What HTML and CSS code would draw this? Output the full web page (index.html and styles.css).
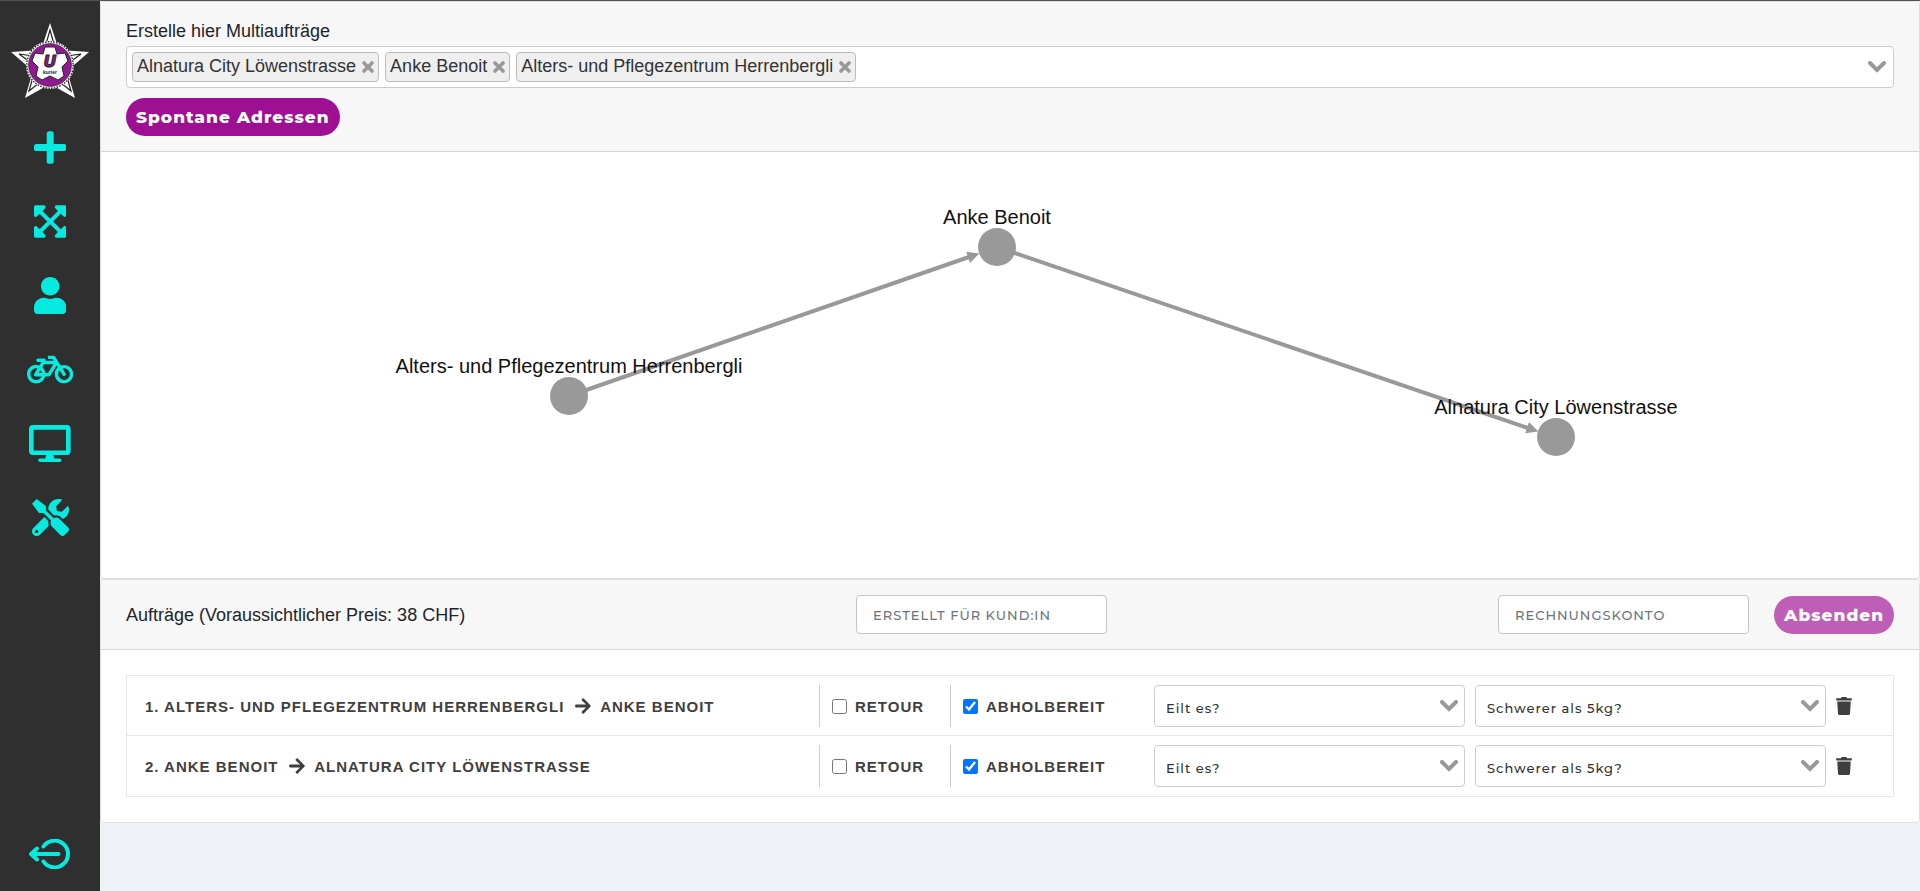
FILE: index.html
```html
<!DOCTYPE html>
<html lang="de">
<head>
    <meta charset="UTF-8">
    <meta name="viewport" content="width=device-width, initial-scale=1.0">
    <title>Multiaufträge</title>
    <link rel="stylesheet" href="styles.css">
</head>
<body>
    <svg class="sprite" aria-hidden="true">
        <symbol id="chevron" viewBox="0 0 18 12">
            <path d="M2 2l7 7 7-7" fill="none" stroke="currentColor" stroke-width="4" stroke-linecap="round"/>
        </symbol>
        <symbol id="cross" viewBox="0 0 12 12">
            <path d="M2 2l8 8M10 2l-8 8" fill="none" stroke="currentColor" stroke-width="3.6" stroke-linecap="round"/>
        </symbol>
        <symbol id="arrow" viewBox="0 0 448 512">
            <path fill="currentColor" d="M190.5 66.9l22.2-22.2c9.4-9.4 24.6-9.4 33.9 0L441 239c9.4 9.4 9.4 24.6 0 33.9L246.6 467.3c-9.4 9.4-24.6 9.4-33.9 0l-22.2-22.2c-9.5-9.5-9.3-25 .4-34.3L311.4 296H24c-13.3 0-24-10.7-24-24v-32c0-13.3 10.7-24 24-24h287.4L190.9 101.2c-9.8-9.3-10-24.8-.4-34.3z"/>
        </symbol>
        <symbol id="trash" viewBox="0 0 448 512">
            <path fill="currentColor" d="M432 32H312l-9.4-18.7A24 24 0 0 0 281.1 0H166.8a23.72 23.72 0 0 0-21.4 13.3L136 32H16A16 16 0 0 0 0 48v32a16 16 0 0 0 16 16h416a16 16 0 0 0 16-16V48a16 16 0 0 0-16-16zM53.2 467a48 48 0 0 0 47.9 45h245.8a48 48 0 0 0 47.9-45L416 128H32z"/>
        </symbol>
    </svg>

    <nav class="sidebar">
        <a href="#" class="logo" aria-label="Startseite">
            <svg width="78" height="76" viewBox="0 0 78 76">
                <path d="M39 0l9 27 30 2-22 19 8 27-25-14-25 14 8-27L0 29l30-2z" fill="#fff"/>
                <path d="M39 7l-4 14h8zM8 31l11 8 3-6zM70 31l-11 8-3-6zM18 68l4-14 6 6zM60 68l-4-14-6 6z" fill="none" stroke="#222" stroke-width="1.2"/>
                <circle cx="39" cy="42" r="24" fill="#fff"/>
                <circle cx="39" cy="42" r="23.2" fill="none" stroke="#222" stroke-width="1.4" stroke-dasharray="1.5 1.3"/>
                <circle cx="39" cy="42" r="21.5" fill="#8f1a8f" stroke="#222" stroke-width=".6"/>
                <path d="M34 24h10l2 7 8-1 3 8-6 6 2 9-6 4-8-4-8 4-6-4 2-9-6-6 3-8 8 1z" fill="#fff" stroke="#222" stroke-linejoin="round"/>
                <text x="39" y="44" class="logo-letter">U</text>
                <text x="39" y="51" class="logo-word">kurier</text>
            </svg>
        </a>
        <ul class="menu">
            <li><a href="#" aria-label="Neuer Auftrag"><svg viewBox="0 0 448 512"><path d="M416 208H272V64c0-17.67-14.33-32-32-32h-32c-17.67 0-32 14.33-32 32v144H32c-17.67 0-32 14.33-32 32v32c0 17.67 14.33 32 32 32h144v144c0 17.67 14.33 32 32 32h32c17.67 0 32-14.33 32-32V304h144c17.67 0 32-14.33 32-32v-32c0-17.67-14.33-32-32-32z"/></svg></a></li>
            <li><a href="#" aria-label="Multiaufträge"><svg viewBox="0 0 448 512"><path d="M448 344v112a23.94 23.94 0 0 1-24 24H312c-21.39 0-32.09-25.9-17-41l36.2-36.2L224 295.6 116.77 402.9 153 439c15.09 15.1 4.39 41-17 41H24a23.94 23.94 0 0 1-24-24V344c0-21.4 25.89-32.1 41-17l36.19 36.2L184.46 256 77.18 148.7 41 185c-15.1 15.1-41 4.4-41-17V56a23.94 23.94 0 0 1 24-24h112c21.39 0 32.09 25.9 17 41l-36.2 36.2L224 216.4l107.23-107.3L295 73c-15.09-15.1-4.39-41 17-41h112a23.94 23.94 0 0 1 24 24v112c0 21.4-25.89 32.1-41 17l-36.19-36.2L263.54 256l107.28 107.3L407 327.1c15.1-15.2 41-4.5 41 16.9z"/></svg></a></li>
            <li><a href="#" aria-label="Kunden"><svg viewBox="0 0 448 512"><path d="M224 256c70.7 0 128-57.3 128-128S294.7 0 224 0 96 57.3 96 128s57.3 128 128 128zm89.6 32h-16.7c-22.2 10.2-46.9 16-72.9 16s-50.6-5.8-72.9-16h-16.7C60.2 288 0 348.2 0 422.4V464c0 26.5 21.5 48 48 48h352c26.5 0 48-21.5 48-48v-41.6c0-74.2-60.2-134.4-134.4-134.4z"/></svg></a></li>
            <li><a href="#" aria-label="Kuriere"><svg viewBox="0 0 640 512"><path d="M512.509 192.001c-16.373-.064-32.03 2.955-46.436 8.495l-77.68-125.153A24 24 0 0 0 368.001 64h-64c-8.837 0-16 7.163-16 16v16c0 8.837 7.163 16 16 16h50.649l14.896 24H256.002v-16c0-8.837-7.163-16-16-16h-87.459c-13.441 0-24.777 10.999-24.536 24.437.232 13.044 10.876 23.563 23.995 23.563h48.726l-29.417 47.52c-13.433-4.83-27.904-7.483-42.992-7.52C58.094 191.83.412 249.012.002 319.236-.413 390.279 57.055 448 128.002 448c59.642 0 109.758-40.793 123.967-96h52.033a24 24 0 0 0 20.406-11.367L410.37 201.77l14.938 24.067c-25.455 23.448-41.385 57.081-41.307 94.437.145 68.833 57.899 127.051 126.729 127.719 70.606.685 128.181-55.803 129.255-125.996 1.086-70.941-56.526-129.72-127.476-129.996zM186.75 265.772c9.727 10.529 16.673 23.661 19.642 38.228h-43.306l23.664-38.228zM128.002 400c-44.112 0-80-35.888-80-80s35.888-80 80-80c5.869 0 11.586.653 17.099 1.859l-45.505 73.509C89.715 331.327 101.213 352 120.002 352h81.3c-12.37 28.225-40.562 48-73.3 48zm162.63-96h-35.624c-3.96-31.756-19.556-59.894-42.383-80.026L237.371 184h127.547l-74.286 120zm217.057 95.886c-41.036-2.165-74.049-35.692-75.627-76.755-.812-21.121 6.633-40.518 19.335-55.263l44.433 71.586c4.66 7.508 14.524 9.816 22.032 5.156l13.594-8.437c7.508-4.66 9.817-14.524 5.156-22.032l-44.468-71.643a79.901 79.901 0 0 1 19.858-2.497c44.112 0 80 35.888 80 80-.001 45.54-38.252 82.316-84.313 79.885z"/></svg></a></li>
            <li><a href="#" aria-label="Leitstelle"><svg viewBox="0 0 576 512"><path d="M528 0H48C21.5 0 0 21.5 0 48v320c0 26.5 21.5 48 48 48h192l-16 48h-72c-13.3 0-24 10.7-24 24s10.7 24 24 24h272c13.3 0 24-10.7 24-24s-10.7-24-24-24h-72l-16-48h192c26.5 0 48-21.5 48-48V48c0-26.5-21.5-48-48-48zm-16 352H64V64h448v288z"/></svg></a></li>
            <li><a href="#" aria-label="Einstellungen"><svg viewBox="0 0 512 512"><path d="M501.1 395.7L384 278.6c-23.1-23.1-57.6-27.6-85.4-13.9L192 158.1V96L64 0 0 64l96 128h62.1l106.6 106.6c-13.6 27.8-9.2 62.3 13.9 85.4l117.1 117.1c14.6 14.6 38.2 14.6 52.7 0l52.7-52.7c14.5-14.6 14.5-38.2 0-52.7zM331.7 225c28.3 0 54.9 11 74.9 31l19.4 19.4c15.8-6.9 30.8-16.5 43.8-29.5 37.1-37.1 49.7-89.3 37.9-136.7-2.2-9-13.5-12.1-20.1-5.5l-74.4 74.4-67.9-11.3L334 98.9l74.4-74.4c6.6-6.6 3.4-17.9-5.7-20.2-47.4-11.7-99.6.9-136.6 37.9-28.5 28.5-41.9 66.1-41.2 103.6l82.1 82.1c8.1-1.9 16.5-2.9 24.7-2.9zm-103.9 82l-56.7-56.7L18.7 402.8c-25 25-25 65.5 0 90.5s65.5 25 90.5 0l123.6-123.6c-7.6-19.9-9.9-41.6-5-62.7zM64 472c-13.2 0-24-10.8-24-24 0-13.3 10.7-24 24-24s24 10.7 24 24c0 13.2-10.7 24-24 24z"/></svg></a></li>
        </ul>
        <a href="#" class="logout" aria-label="Abmelden">
            <svg width="42" height="30" viewBox="0 0 42 30"><path d="M14.5 7.5a13.4 13.4 0 1 1 0 15M29.5 15H3M8 9.5L2 15l6 5.5"/></svg>
        </a>
    </nav>

    <main class="content">
        <section class="card">
            <div class="card-header">
                <label class="title" for="addressInput">Erstelle hier Multiaufträge</label>
                <div class="multiselect">
                    <span class="chip">Alnatura City Löwenstrasse<button type="button" aria-label="Entfernen"><svg><use href="#cross"/></svg></button></span>
                    <span class="chip">Anke Benoit<button type="button" aria-label="Entfernen"><svg><use href="#cross"/></svg></button></span>
                    <span class="chip">Alters- und Pflegezentrum Herrenbergli<button type="button" aria-label="Entfernen"><svg><use href="#cross"/></svg></button></span>
                    <input type="text" id="addressInput">
                    <svg class="chevron"><use href="#chevron"/></svg>
                </div>
                <button type="button" class="btn">Spontane Adressen</button>
            </div>
            <svg class="graph" viewBox="0 0 1818 426">
                <defs>
                    <marker id="arrowHead" markerUnits="userSpaceOnUse" markerWidth="12" markerHeight="12" refX="1" refY="6" orient="auto">
                        <path d="M0 0l12 6-12 6z" fill="#999"/>
                    </marker>
                </defs>
                <g class="edges">
                    <line x1="468" y1="244" x2="868" y2="105"/>
                    <line x1="896" y1="95" x2="1427" y2="276"/>
                </g>
                <g class="nodes">
                    <circle cx="468" cy="244" r="19"/>
                    <circle cx="896" cy="95" r="19"/>
                    <circle cx="1455" cy="285" r="19"/>
                </g>
                <g class="labels">
                    <text x="468" y="221">Alters- und Pflegezentrum Herrenbergli</text>
                    <text x="896" y="72">Anke Benoit</text>
                    <text x="1455" y="262">Alnatura City Löwenstrasse</text>
                </g>
            </svg>
        </section>

        <section class="card">
            <div class="card-header toolbar">
                <h2 class="title">Aufträge (Voraussichtlicher Preis: 38 CHF)</h2>
                <input type="text" class="field" placeholder="Erstellt für Kund:in" aria-label="Erstellt für Kund:in">
                <div class="toolbar-end">
                    <input type="text" class="field" placeholder="Rechnungskonto" aria-label="Rechnungskonto">
                    <button type="submit" class="btn btn-disabled">Absenden</button>
                </div>
            </div>
            <ul class="orders">
                <li class="order">
                    <div class="route">1. Alters- und Pflegezentrum Herrenbergli <svg><use href="#arrow"/></svg> Anke Benoit</div>
                    <label class="check"><input type="checkbox">Retour</label>
                    <label class="check"><input type="checkbox" checked>Abholbereit</label>
                    <div class="select">
                        <select aria-label="Eilt es?"><option>Eilt es?</option></select>
                        <svg class="chevron"><use href="#chevron"/></svg>
                    </div>
                    <div class="select">
                        <select aria-label="Schwerer als 5kg?"><option>Schwerer als 5kg?</option></select>
                        <svg class="chevron"><use href="#chevron"/></svg>
                    </div>
                    <button type="button" class="delete" aria-label="Löschen"><svg><use href="#trash"/></svg></button>
                </li>
                <li class="order">
                    <div class="route">2. Anke Benoit <svg><use href="#arrow"/></svg> Alnatura City Löwenstrasse</div>
                    <label class="check"><input type="checkbox">Retour</label>
                    <label class="check"><input type="checkbox" checked>Abholbereit</label>
                    <div class="select">
                        <select aria-label="Eilt es?"><option>Eilt es?</option></select>
                        <svg class="chevron"><use href="#chevron"/></svg>
                    </div>
                    <div class="select">
                        <select aria-label="Schwerer als 5kg?"><option>Schwerer als 5kg?</option></select>
                        <svg class="chevron"><use href="#chevron"/></svg>
                    </div>
                    <button type="button" class="delete" aria-label="Löschen"><svg><use href="#trash"/></svg></button>
                </li>
            </ul>
        </section>
    </main>
</body>
</html>
```
FILE: styles.css
```css
:root {
    --purple: #9f0f93;
    --cyan: #07eadf;
    --dark: #2f2f2f;
    --text: #3f3f3f;
    --border: #dfdfdf;
    --display: Montserrat, Inter, sans-serif;
}

* {
    margin: 0;
    padding: 0;
    box-sizing: border-box;
}

body {
    display: flex;
    min-height: 100vh;
    background: #eff3f8;
    border-top: 1px solid #555055;
    color: #212529;
    font-family: Arial, "Liberation Sans", sans-serif;
    font-size: 18px;
}

.sprite {
    position: absolute;
    width: 0;
    height: 0;
}

/* Sidebar */
.sidebar {
    width: 100px;
    flex-shrink: 0;
    display: flex;
    flex-direction: column;
    align-items: center;
    padding: 22px 0;
    background: var(--dark);
}

.logo svg {
    display: block;
}

.logo-letter {
    font: italic bold 16px "DejaVu Sans", sans-serif;
    text-anchor: middle;
    fill: #8f1a8f;
    stroke: #222;
    stroke-width: 1px;
}

.logo-word {
    font: bold 5px Arial, "Liberation Sans", sans-serif;
    text-anchor: middle;
    fill: #222;
}

.menu {
    list-style: none;
    margin-top: 11px;
}

.menu a {
    display: flex;
    align-items: center;
    justify-content: center;
    height: 74px;
}

.menu svg {
    height: 37px;
    fill: var(--cyan);
}

.logout {
    margin-top: auto;
}

.logout svg {
    display: block;
    fill: none;
    stroke: var(--cyan);
    stroke-width: 4;
    stroke-linecap: round;
    stroke-linejoin: round;
}

/* Cards */
.content {
    flex: 1;
    min-width: 0;
}

.card {
    background: #fff;
    border: 1px solid var(--border);
    border-radius: 4px;
    overflow: hidden;
}

.card-header {
    padding: 15px 25px;
    background: #f7f7f7;
    border-bottom: 1px solid #d6d6d6;
}

.title {
    display: block;
    font-size: 18px;
    font-weight: normal;
    line-height: 28px;
}

.multiselect {
    display: flex;
    align-items: center;
    gap: 6px;
    min-height: 42px;
    margin: 1px 0 10px;
    padding: 5px;
    background: #fff;
    border: 1px solid #ccc;
    border-radius: 4px;
}

.multiselect input {
    flex: 1;
    min-width: 0;
    border: none;
    outline: none;
    font: inherit;
}

.chip {
    display: flex;
    align-items: center;
    gap: 6px;
    height: 30px;
    padding: 0 4px 2px;
    background: #efefef;
    border: 1px solid #bbb;
    border-radius: 4px;
    color: #333;
    white-space: nowrap;
}

.chip button {
    padding-top: 2px;
    background: none;
    border: none;
    color: #999;
    cursor: pointer;
}

.chip svg {
    display: block;
    width: 12px;
    height: 12px;
}

.chevron {
    width: 18px;
    height: 12px;
    color: #999;
}

.multiselect .chevron {
    margin-right: 2px;
}

.btn {
    height: 38px;
    padding: 0 10px;
    background: var(--purple);
    border: none;
    border-radius: 19px;
    color: #fff;
    font-family: var(--display);
    font-size: 17px;
    font-weight: 800;
    letter-spacing: 1px;
    cursor: pointer;
}

.btn-disabled {
    background: #be5eb7;
}

/* Graph */
.graph {
    display: block;
    width: 100%;
}

.edges line {
    stroke: #999;
    stroke-width: 4;
    marker-end: url(#arrowHead);
}

.nodes circle {
    fill: #999;
}

.labels text {
    fill: #111;
    font-size: 20px;
    text-anchor: middle;
}

/* Orders */
.toolbar,
.toolbar-end {
    display: flex;
    align-items: center;
    justify-content: space-between;
}

.toolbar-end {
    gap: 25px;
}

.field {
    width: 251px;
    height: 39px;
    padding: 0 16px;
    background: #fff;
    border: 1px solid #c0c5ca;
    border-radius: 4px;
    font-family: var(--display);
    font-size: 13px;
    letter-spacing: 1px;
}

.field::placeholder {
    color: #6c757d;
    font-weight: 500;
    text-transform: uppercase;
}

.orders {
    list-style: none;
    margin: 25px;
    border: 1px solid #e6e6e6;
}

.order {
    display: grid;
    grid-template-columns: 69fr 131px 204px 32fr 35fr 67px;
    align-items: center;
    padding: 9px 0 8px;
    color: var(--text);
    font-size: 15px;
    font-weight: bold;
    letter-spacing: 1px;
    text-transform: uppercase;
}

.order + .order {
    padding-bottom: 9px;
    border-top: 1px solid #e6e6e6;
}

.route {
    padding-left: 18px;
}

.route svg {
    width: 16px;
    height: 18px;
    margin: 0 5px;
    vertical-align: -3px;
}

.check {
    display: flex;
    align-items: center;
    gap: 8px;
    height: 42px;
    padding-left: 12px;
    border-left: 1px solid #ccc;
}

.check input {
    width: 15px;
    height: 15px;
}

.select {
    display: grid;
    align-items: center;
    margin-right: 10px;
}

.select + .select {
    margin-right: 0;
}

.select select,
.select .chevron {
    grid-area: 1 / 1;
}

.select select {
    width: 100%;
    height: 42px;
    padding: 4px 30px 0 11px;
    appearance: none;
    background: #fff;
    border: 1px solid #ccc;
    border-radius: 4px;
    color: #333;
    font-family: var(--display);
    font-size: 13px;
    font-weight: 500;
    letter-spacing: 1px;
}

.select .chevron {
    justify-self: end;
    margin-right: 7px;
    pointer-events: none;
}

.delete {
    justify-self: start;
    margin-left: 10px;
    background: none;
    border: none;
    color: var(--text);
    cursor: pointer;
}

.delete svg {
    display: block;
    width: 16px;
    height: 18px;
}
```
